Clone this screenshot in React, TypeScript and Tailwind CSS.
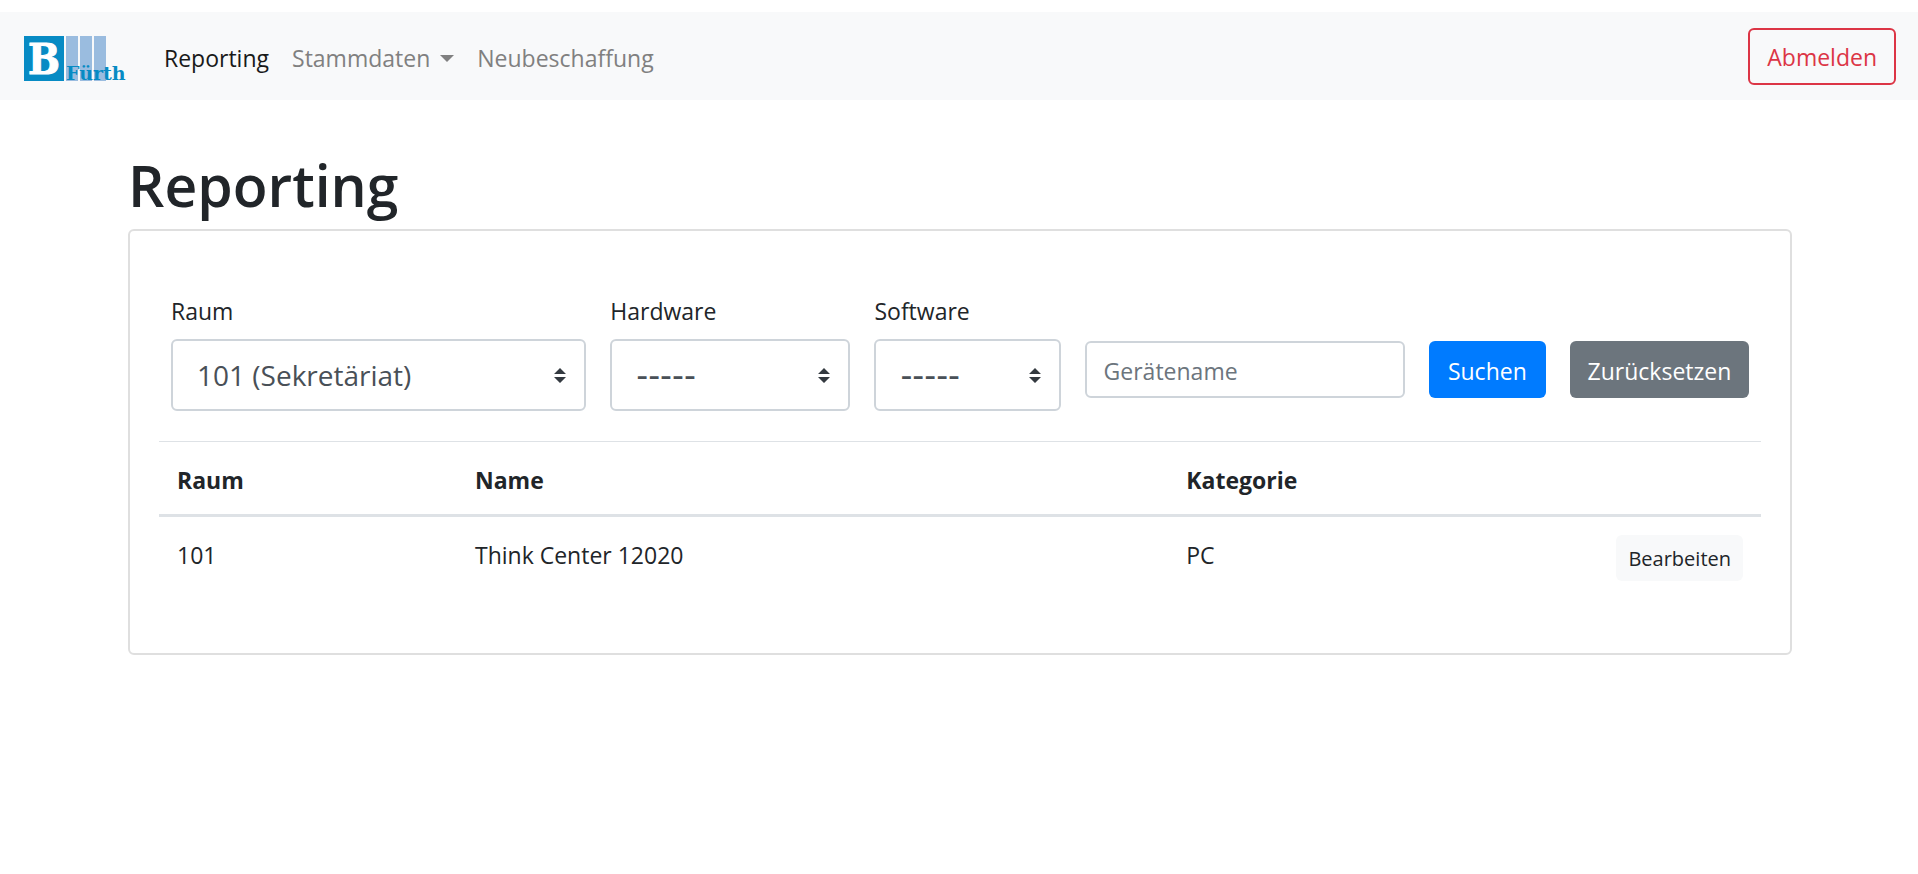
import React from "react";

function Logo() {
  return (
    <svg viewBox="0 0 104 45" className="block h-[45px] w-[104px] overflow-visible" role="img" aria-label="B Fürth">
      <rect x="0" y="0" width="40" height="45" fill="#078bc4" />
      <rect x="42" y="0" width="12" height="45" fill="#9abcdf" />
      <rect x="56" y="0" width="12" height="45" fill="#9abcdf" />
      <rect x="70" y="0" width="12" height="45" fill="#9abcdf" />
      <text
        x="20"
        y="38"
        textAnchor="middle"
        fontFamily="'DejaVu Serif Condensed', 'DejaVu Serif', serif"
        fontWeight="700"
        fontSize="42"
        fill="#fff"
        stroke="#fff"
        strokeWidth="1"
        strokeLinejoin="round"
      >
        B
      </text>
      <text
        x="42"
        y="44"
        fontFamily="'DejaVu Serif', serif"
        fontWeight="700"
        fontSize="19"
        fill="#078bc4"
      >
        Fürth
      </text>
    </svg>
  );
}

type SelectFieldProps = { id: string; label: string; option: string; textClass: string };

function SelectField({ id, label, option, textClass }: SelectFieldProps) {
  return (
    <div className="flex min-w-0 flex-col gap-[10px]">
      <label htmlFor={id} className="leading-9">
        {label}
      </label>
      <div className="relative">
        <select
          id={id}
          className={
            "block h-[72px] w-full appearance-none rounded-md border-2 border-[#ced4da] bg-white pr-12 pl-6 text-[#495057] " +
            textClass
          }
        >
          <option>{option}</option>
        </select>
        <svg
          viewBox="0 0 12 15"
          className="pointer-events-none absolute top-[29px] right-5 h-[15px] w-3"
          fill="#343a40"
          aria-hidden="true"
        >
          <path d="M0 6 6 0l6 6zM0 9h12l-6 6z" />
        </svg>
      </div>
    </div>
  );
}

const rows = [{ raum: "101", name: "Think Center 12020", kategorie: "PC" }];

export default function App() {
  return (
    <div className="pt-3 font-['Open_Sans','Noto_Sans',sans-serif] text-[23px] leading-9 text-[#212529]">
      <nav className="flex h-[88px] items-center bg-[#f8f9fa] pr-[22px] pl-6">
        <div className="flex items-center gap-9 pt-1">
          <a href="#">
            <Logo />
          </a>
          <div className="flex gap-[23px] text-[#808080]">
            <a href="#" className="text-[#191919]">
              Reporting
            </a>
            <a href="#" className="flex items-center gap-[10px]">
              Stammdaten
              <svg viewBox="0 0 14 7" className="h-[7px] w-[14px]" fill="currentColor" aria-hidden="true">
                <path d="M0 0h14L7 7z" />
              </svg>
            </a>
            <a href="#">Neubeschaffung</a>
          </div>
        </div>
        <button
          type="button"
          className="ml-auto h-[57px] rounded-md border-2 border-[#dc3545] px-[17px] pt-[2px] text-[#dc3545]"
        >
          Abmelden
        </button>
      </nav>

      <main className="mx-auto max-w-[1714px] pt-[49px] pr-6 pl-[26px]">
        <h1 className="mb-2 text-[57px] leading-[72px] font-semibold">Reporting</h1>
        <section className="rounded-md border-2 border-[#dfdfdf] px-[29px] pt-[62px] pb-[54px]">
          <form
            className="grid grid-cols-[415fr_240fr_186fr_320fr_117fr_179fr] items-end gap-6 px-3"
            onSubmit={(e) => e.preventDefault()}
          >
            <SelectField id="raum" label="Raum" option="101 (Sekretäriat)" textClass="text-[28px]" />
            <SelectField
              id="hardware"
              label="Hardware"
              option="-----"
              textClass="pt-[2px] font-['DejaVu_Sans',sans-serif] text-[33px]"
            />
            <SelectField
              id="software"
              label="Software"
              option="-----"
              textClass="pt-[2px] font-['DejaVu_Sans',sans-serif] text-[33px]"
            />
            <input
              type="text"
              aria-label="Gerätename"
              placeholder="Gerätename"
              className="mb-[13px] h-[57px] w-full min-w-0 rounded-md border-2 border-[#ced4da] px-[17px] pt-[2px] placeholder:text-[#6c757d]"
            />
            <button type="submit" className="mb-[13px] h-[57px] rounded-md bg-[#007bff] pt-[2px] text-white">
              Suchen
            </button>
            <button type="reset" className="mb-[13px] h-[57px] rounded-md bg-[#6c757d] pt-[2px] text-white">
              Zurücksetzen
            </button>
          </form>

          <table className="mt-[30px] w-full table-fixed border-collapse border-t border-[#dee2e6] text-left">
            <colgroup>
              <col className="w-[18.6%]" />
              <col className="w-[44.4%]" />
              <col className="w-[19%]" />
              <col className="w-[18%]" />
            </colgroup>
            <thead>
              <tr className="border-b-3 border-[#dee2e6]">
                <th className="px-[18px] pt-5 pb-4 font-bold">Raum</th>
                <th className="px-[18px] pt-5 pb-4 font-bold">Name</th>
                <th className="px-[18px] pt-5 pb-4 font-bold">Kategorie</th>
                <td />
              </tr>
            </thead>
            <tbody>
              {rows.map((row) => (
                <tr key={row.name} className="align-top">
                  <td className="px-[18px] pt-5 pb-4">{row.raum}</td>
                  <td className="px-[18px] pt-5 pb-4">{row.name}</td>
                  <td className="px-[18px] pt-5 pb-4">{row.kategorie}</td>
                  <td className="px-[18px] py-[18px] text-right">
                    <button
                      type="button"
                      className="ml-auto block h-[46px] rounded-md bg-[#f8f9fa] px-3 pt-[2px] text-[20px]"
                    >
                      Bearbeiten
                    </button>
                  </td>
                </tr>
              ))}
            </tbody>
          </table>
        </section>
      </main>
    </div>
  );
}
